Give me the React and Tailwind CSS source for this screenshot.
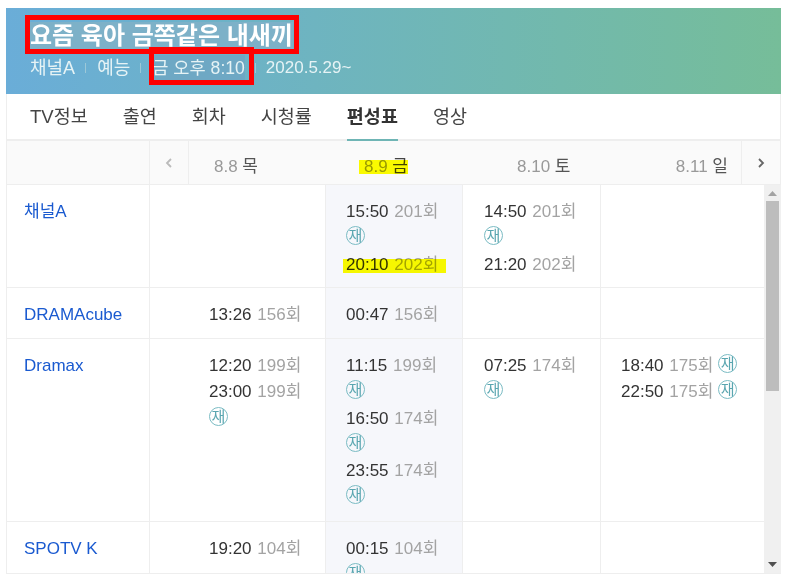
const Re = () => (
  <span className="inline-flex h-[19px] w-[19px] items-center justify-center rounded-full border border-[#7bbcc4] align-[2px] text-[15px] leading-none text-[#5aa6b0]">재</span>
);

const Show = ({ t, n, re, inline }) => (
  <>
    <div>
      <span className="text-[#333]">{t}</span> <span className="ml-px text-[#a3a3a3]">{n}회</span>
      {re && inline && <> <Re /></>}
    </div>
    {re && !inline && <div><Re /></div>}
  </>
);

const cols = "grid grid-cols-[143px_176px_137px_138px_1fr]";

const Cell = ({ pl = "pl-5", today, children }) => (
  <div className={`border-r border-[#eeeeee] pt-[14px] ${pl} ${today ? "bg-[#f6f7fb]" : ""}`}>{children}</div>
);

const Row = ({ h, name, c2, c3, c4, c5 }) => (
  <div className={`${cols} ${h} border-b border-[#eeeeee]`}>
    <div className="border-r border-[#eeeeee] pl-[17px] pt-[14px] text-[#1a5ad0]">{name}</div>
    <Cell pl="pl-[59px]">{c2}</Cell>
    <Cell today>{c3}</Cell>
    <Cell pl="pl-[21px]">{c4}</Cell>
    <div className="whitespace-nowrap pl-5 pt-[14px]">{c5}</div>
  </div>
);

export default function App() {
  return (
    <div className="relative h-[581px] w-[790px] overflow-hidden bg-white pl-[6px] pt-2 text-[17px] leading-[26.3px]" style={{ fontFamily: '"Liberation Sans","Noto Sans CJK KR",sans-serif' }}>
      <div className="w-[775px]">
        <header className="h-[86px] bg-gradient-to-r from-[#6aadd8] to-[#76bd99] pl-6 pt-[14px] text-white">
          <h1 className="text-[24px] font-bold leading-[27px]"><span className="bg-[#7db1c8]">요즘 육아 금쪽같은 내새끼</span></h1>
          <div className="mt-[6px] flex items-center text-[18px] leading-[26px] text-[#e6f3f5]">
            <span>채널A</span>
            <span className="ml-[10px] mr-[11px] h-[10px] w-px bg-[#9cc8d8]" />
            <span>예능</span>
            <span className="ml-[10px] mr-[11px] h-[10px] w-px bg-[#9cc8d8]" />
            <span className="bg-[#6ea8c4] text-[17.6px]">금 오후 8:10</span>
            <span className="ml-[10px] mr-[10px] h-[10px] w-px bg-[#9cc8d8]" />
            <span className="text-[17px]">2020.5.29~</span>
          </div>
        </header>

        <nav className="flex h-[47px] gap-[35px] border-x border-b-2 border-[#eeeeee] pl-[23px] text-[18.500px] text-[#444]">
          <a className="pt-[10px]">TV정보</a>
          <a className="pt-[10px]">출연</a>
          <a className="pt-[10px]">회차</a>
          <a className="pt-[10px]">시청률</a>
          <a className="-mb-[2px] border-b-2 border-[#6fb5b5] pt-[10px] font-bold text-[#333]">편성표</a>
          <a className="pt-[10px]">영상</a>
        </nav>

        <div className={`${cols} h-[44px] border-x border-b border-[#eeeeee] bg-[#fafafa]`}>
          <div className="border-r border-[#eeeeee]" />
          <div className="flex items-center">
            <span className="flex h-full w-[39px] items-center justify-center border-r border-[#eeeeee]">
              <svg width="8" height="12" viewBox="0 0 8 12" fill="none" stroke="#bbbbbb" strokeWidth="1.8"><path d="M6 2 2 6l4 4" /></svg>
            </span>
            <span className="ml-[25px] whitespace-nowrap pt-[10px] text-[#999]">8.8 <span className="text-[#555]">목</span></span>
          </div>
          <div className="flex items-center pl-[38px] pt-[10px]">
            <span className="relative whitespace-nowrap text-[#999]">8.9 <span className="text-[#444]">금</span>
              <span className="absolute -left-[5px] top-[6px] h-[14px] w-[49px] bg-[#ffff00] mix-blend-multiply" />
            </span>
          </div>
          <div className="flex items-center pl-[54px] pt-[10px] text-[#999]"><span className="whitespace-nowrap">8.10 <span className="text-[#555]">토</span></span></div>
          <div className="flex items-center justify-end">
            <span className="mr-[13px] whitespace-nowrap pt-[10px] text-[#999]">8.11 <span className="text-[#555]">일</span></span>
            <span className="flex h-full w-[39px] shrink-0 items-center justify-center border-l border-[#eeeeee]">
              <svg width="8" height="12" viewBox="0 0 8 12" fill="none" stroke="#666666" strokeWidth="1.8"><path d="M2 2l4 4-4 4" /></svg>
            </span>
          </div>
        </div>

        <div className="flex h-[389px] overflow-hidden border-b border-l border-[#eeeeee]">
          <div className="min-w-0 flex-1 overflow-hidden">
            <Row h="h-[103px]" name="채널A"
              c3={<><Show t="15:50" n="201" re />
                <div className="relative">
                  <Show t="20:10" n="202" />
                  <span className="absolute -left-[3px] top-[7px] h-[14px] w-[103px] bg-[#ffff00] mix-blend-multiply" />
                </div></>}
              c4={<><Show t="14:50" n="201" re /><Show t="21:20" n="202" /></>}
            />
            <Row h="h-[51px]" name="DRAMAcube" c2={<Show t="13:26" n="156" />} c3={<Show t="00:47" n="156" />} />
            <Row h="h-[183px]" name="Dramax"
              c2={<><Show t="12:20" n="199" /><Show t="23:00" n="199" re /></>}
              c3={<><Show t="11:15" n="199" re /><Show t="16:50" n="174" re /><Show t="23:55" n="174" re /></>}
              c4={<Show t="07:25" n="174" re />}
              c5={<><Show t="18:40" n="175" re inline /><Show t="22:50" n="175" re inline /></>}
            />
            <Row h="h-[60px]" name="SPOTV K" c2={<Show t="19:20" n="104" />} c3={<Show t="00:15" n="104" re />} />
          </div>
          <div className="flex w-[17px] flex-col items-center bg-[#f0f0f0]">
            <svg className="mt-[6px]" width="9" height="5" viewBox="0 0 9 5"><path d="M4.5 0 9 5H0z" fill="#a3a3a3" /></svg>
            <div className="mt-[5px] h-[190px] w-[13px] bg-[#bdbdbd]" />
            <svg className="mb-[6px] mt-auto" width="9" height="5" viewBox="0 0 9 5"><path d="M0 0h9L4.500 5z" fill="#505050" /></svg>
          </div>
        </div>
      </div>

      <div className="absolute left-[25px] top-[15px] h-[39px] w-[274px] border-[5px] border-[#ff0000]" />
      <div className="absolute left-[149px] top-[47px] h-[38px] w-[105px] border-[5px] border-[#ff0000]" />
    </div>
  );
}
